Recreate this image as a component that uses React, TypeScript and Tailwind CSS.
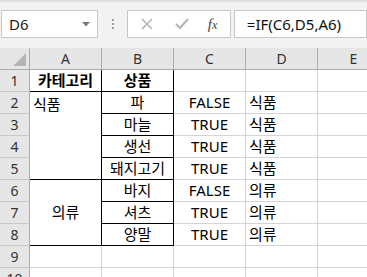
import React from "react";

const font = { fontFamily: '"Noto Sans", "Noto Sans CJK KR", sans-serif' };

const cols = ["A", "B", "C", "D", "E"];

const RowHead = ({ n }: { n: number }) => (
	<div className="flex items-center justify-center border-r border-b border-r-[#ababab] border-b-[#c9c9c9] bg-[#e6e6e6] text-[14px] text-[#333]">
		{n}
	</div>
);

// plain cell with light gridlines
const Cell = ({ children, className = "" }: { children?: React.ReactNode; className?: string }) => (
	<div className={"flex items-center border-r border-b text-[15px] leading-none text-black " + className}>{children}</div>
);

const grid = "border-r-[#d4d4d4] border-b-[#d4d4d4]";
const boxed = "border-r-black border-b-black";

const App = () => {
	return (
		<div className="w-[367px] h-[277px] overflow-hidden bg-white select-none" style={font}>
			{/* formula bar */}
			<div className="h-[48px] bg-[#f3f3f3] flex flex-col">
				<div className="h-[3px] bg-gradient-to-b from-[#d9d9d9] to-[#f0f0f0]" />
				<div className="flex items-start pt-[7px]">
					<div className="ml-[1px] w-[102px] h-[28px] border border-[#c6c6c6] bg-white flex items-center justify-between pl-[7px] pr-[7px]">
						<span className="text-[15px] text-[#222]">D6</span>
						<svg width="8" height="5" viewBox="0 0 8 5">
							<path d="M0 0 L8 0 L4 4.5 Z" fill="#7a7a7a" />
						</svg>
					</div>
					<div className="w-[30px] h-[28px] flex flex-col items-center justify-center gap-[2px]">
						<div className="w-[2px] h-[2px] bg-[#a0a0a0]" />
						<div className="w-[2px] h-[2px] bg-[#a0a0a0]" />
						<div className="w-[2px] h-[2px] bg-[#a0a0a0]" />
					</div>
					<div className="w-[110px] h-[28px] border border-[#c6c6c6] bg-white flex items-center">
						<svg width="12" height="12" viewBox="0 0 12 12" className="ml-[13px]">
							<path d="M1 1 L11 11 M11 1 L1 11" stroke="#b4b4b4" strokeWidth="1.6" />
						</svg>
						<svg width="14" height="12" viewBox="0 0 14 12" className="ml-[22px]">
							<path d="M1 6 L5 10 L13 1" stroke="#b4b4b4" strokeWidth="2" fill="none" />
						</svg>
						<span
							className="ml-[19px] text-[15px] italic text-[#444] leading-none"
							style={{ fontFamily: '"Liberation Serif", serif' }}
						>
							f<span className="text-[12px]">x</span>
						</span>
					</div>
					<div className="ml-[3px] w-[140px] h-[28px] border border-[#c6c6c6] bg-white flex items-center pl-[12px] text-[15px] text-[#111]">
						=IF(C6,D5,A6)
					</div>
				</div>
			</div>

			{/* sheet */}
			<div className="grid grid-cols-[30px_72px_72px_72px_72px_72px] auto-rows-[22px]">
				<div className="relative border-r border-b border-[#ababab] bg-[#e6e6e6]">
					<svg width="14" height="14" viewBox="0 0 14 14" className="absolute left-[13px] top-[5px]">
						<path d="M13 0 L13 13 L0 13 Z" fill="#b5b5b5" />
					</svg>
				</div>
				{cols.map((c) => (
					<div
						key={c}
						className="flex items-center justify-center border-r border-b border-[#ababab] bg-[#e6e6e6] text-[14px] text-[#333]"
					>
						{c}
					</div>
				))}

				{/* row 1 */}
				<RowHead n={1} />
				<Cell className={"justify-center font-bold " + boxed}>카테고리</Cell>
				<Cell className={"justify-center font-bold " + boxed}>상품</Cell>
				<Cell className={grid} />
				<Cell className={grid} />
				<Cell className={grid} />

				{/* row 2 */}
				<RowHead n={2} />
				<div className={"row-span-4 border-r border-b pl-[3px] pt-[5px] text-[15px] leading-none " + boxed}>식품</div>
				<Cell className={"justify-center " + boxed}>파</Cell>
				<Cell className={"justify-center " + grid}>FALSE</Cell>
				<Cell className={"pl-[3px] " + grid}>식품</Cell>
				<Cell className={grid} />

				{/* row 3 */}
				<RowHead n={3} />
				<Cell className={"justify-center " + boxed}>마늘</Cell>
				<Cell className={"justify-center " + grid}>TRUE</Cell>
				<Cell className={"pl-[3px] " + grid}>식품</Cell>
				<Cell className={grid} />

				{/* row 4 */}
				<RowHead n={4} />
				<Cell className={"justify-center " + boxed}>생선</Cell>
				<Cell className={"justify-center " + grid}>TRUE</Cell>
				<Cell className={"pl-[3px] " + grid}>식품</Cell>
				<Cell className={grid} />

				{/* row 5 */}
				<RowHead n={5} />
				<Cell className={"justify-center " + boxed}>돼지고기</Cell>
				<Cell className={"justify-center " + grid}>TRUE</Cell>
				<Cell className={"pl-[3px] " + grid}>식품</Cell>
				<Cell className={grid} />

				{/* row 6 */}
				<RowHead n={6} />
				<Cell className={"row-span-3 justify-center " + boxed}>의류</Cell>
				<Cell className={"justify-center " + boxed}>바지</Cell>
				<Cell className={"justify-center " + grid}>FALSE</Cell>
				<Cell className={"pl-[3px] " + grid}>의류</Cell>
				<Cell className={grid} />

				{/* row 7 */}
				<RowHead n={7} />
				<Cell className={"justify-center " + boxed}>셔츠</Cell>
				<Cell className={"justify-center " + grid}>TRUE</Cell>
				<Cell className={"pl-[3px] " + grid}>의류</Cell>
				<Cell className={grid} />

				{/* row 8 */}
				<RowHead n={8} />
				<Cell className={"justify-center " + boxed}>양말</Cell>
				<Cell className={"justify-center " + grid}>TRUE</Cell>
				<Cell className={"pl-[3px] " + grid}>의류</Cell>
				<Cell className={grid} />

				{/* rows 9-10 */}
				{[9, 10].map((n) => (
					<React.Fragment key={n}>
						<RowHead n={n} />
						<Cell className={grid} />
						<Cell className={grid} />
						<Cell className={grid} />
						<Cell className={grid} />
						<Cell className={grid} />
					</React.Fragment>
				))}
			</div>
		</div>
	);
};

export default App;
